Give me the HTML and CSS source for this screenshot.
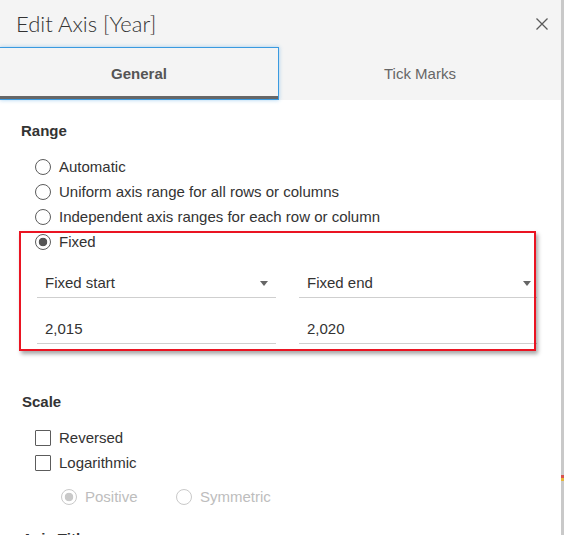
FILE: index.html
```html
<!DOCTYPE html>
<html lang="en">
<head>
<meta charset="utf-8">
<title>Edit Axis [Year]</title>
<link rel="stylesheet" href="styles.css">
</head>
<body>
<div class="page">
  <div class="dialog">
    <header class="head">
      <div class="titlebar">
        <h1 class="title">Edit Axis [Year]</h1>
        <span class="close" aria-label="Close">
          <svg width="14" height="14" viewBox="0 0 14 14"><path d="M1.5 1.5 L12.5 12.5 M12.5 1.5 L1.5 12.5" stroke="#5a5a5a" stroke-width="1.3" fill="none"/></svg>
        </span>
      </div>
      <div class="tabs">
        <div class="tab active">General</div>
        <div class="tab">Tick Marks</div>
      </div>
    </header>
    <main class="content">
      <section class="sec">
        <h2 class="sec-title">Range</h2>
        <ul class="options">
          <li class="opt"><span class="radio"></span>Automatic</li>
          <li class="opt"><span class="radio"></span>Uniform axis range for all rows or columns</li>
          <li class="opt"><span class="radio"></span>Independent axis ranges for each row or column</li>
        </ul>
        <div class="fixed">
          <div class="opt"><span class="radio checked"></span>Fixed</div>
          <div class="fields">
            <div class="field select"><span>Fixed start</span><span class="caret"></span></div>
            <div class="field select end"><span>Fixed end</span><span class="caret"></span></div>
            <div class="field">2,015</div>
            <div class="field">2,020</div>
          </div>
        </div>
      </section>
      <section class="sec">
        <h2 class="sec-title scale">Scale</h2>
        <ul class="options checks">
          <li class="opt"><span class="check"></span>Reversed</li>
          <li class="opt"><span class="check"></span>Logarithmic</li>
        </ul>
        <div class="subopts">
          <div class="opt disabled first"><span class="radio checked"></span>Positive</div>
          <div class="opt disabled"><span class="radio"></span>Symmetric</div>
        </div>
      </section>
      <section class="sec">
        <h2 class="sec-title axis">Axis Titles</h2>
      </section>
    </main>
  </div>
  <div class="edge"></div>
</div>
</body>
</html>
```

FILE: styles.css
```css
html, body {
  margin: 0;
  padding: 0;
  height: 100%;
  overflow: hidden;
}
body {
  font-family: "Liberation Sans", Arial, sans-serif;
  font-size: 15px;
  color: #333;
  background: #fff;
}
.page {
  display: flex;
  height: 535px;
  overflow: hidden;
}
.dialog {
  width: 561px;
  flex: none;
  overflow: hidden;
}
.edge {
  width: 3px;
  flex: none;
  background: linear-gradient(to bottom, #c9c9c9 0, #c9c9c9 475px, #d9534f 475px, #d9534f 478px, #e6b83c 478px, #e6b83c 481px, #c9c9c9 481px);
}

/* header */
.head {
  background: #f4f4f4;
  height: 100px;
}
.titlebar {
  height: 47px;
  display: flex;
  align-items: center;
  justify-content: space-between;
  padding: 0 12px 0 16px;
  box-sizing: border-box;
}
.title {
  margin: 0;
  font-family: Lato, "Liberation Sans", sans-serif;
  font-weight: 300;
  font-size: 22px;
  color: #333;
  line-height: 26px;
  padding-top: 0;
}
.close {
  display: flex;
  width: 14px;
  height: 14px;
  margin-top: 1px;
}
.tabs {
  display: flex;
  height: 53px;
}
.tab {
  flex: 1;
  display: flex;
  align-items: center;
  justify-content: center;
  font-size: 15px;
  color: #666;
  box-sizing: border-box;
}
.tab.active {
  flex: none;
  width: 279px;
  font-weight: bold;
  color: #555;
  border: 1px solid #3a9ae0;
  border-left: none;
  box-shadow: inset 0 -3px 0 #666, 0 0 4px rgba(58, 154, 224, 0.45);
}

/* content */
.content {
  padding: 0 21px;
}
.sec-title {
  margin: 22px 0 14px;
  font-size: 15px;
  font-weight: bold;
  line-height: 18px;
  color: #333;
}
.sec-title.scale {
  margin: 49px 0 14px 1px;
}
.sec-title.axis {
  margin: 21px 0 0 1px;
}
.options {
  list-style: none;
  margin: 0 0 0 14px;
  padding: 0;
}
.opt {
  display: flex;
  align-items: center;
  height: 25px;
  line-height: 25px;
}
.radio, .check {
  flex: none;
  width: 16px;
  height: 16px;
  box-sizing: border-box;
  border: 1px solid #5c5c5c;
  margin-right: 8px;
  background: #fff;
}
.radio {
  border-radius: 50%;
}
.radio.checked {
  background: radial-gradient(circle, #555 0, #555 4px, #fff 4.6px);
}
.check {
  border-radius: 1px;
}

/* fixed group */
.fixed {
  position: relative;
  padding-left: 14px;
}
.fixed::after {
  content: "";
  position: absolute;
  top: 2px;
  left: -2px;
  width: 517px;
  height: 120px;
  box-sizing: border-box;
  border: 2px solid #ea1422;
  box-shadow: 2px 3px 4px rgba(0, 0, 0, 0.35);
  pointer-events: none;
}
.fields {
  display: grid;
  grid-template-columns: 239px 238px;
  column-gap: 23px;
  row-gap: 16px;
  margin: 13px 0 0 2px;
}
.field {
  height: 30px;
  box-sizing: border-box;
  border-bottom: 1px solid #cfcfcf;
  padding: 0 8px;
  display: flex;
  align-items: center;
  justify-content: space-between;
  color: #333;
}
.field.select {
  height: 31px;
}
.field.end {
  padding-right: 6px;
}
.caret {
  width: 0;
  height: 0;
  border-left: 4.5px solid transparent;
  border-right: 4.5px solid transparent;
  border-top: 5px solid #666;
  margin-top: 2px;
}

/* scale */
.checks .opt {
  height: 25px;
}
.subopts {
  display: flex;
  margin: 9px 0 0 40px;
}
.subopts .first {
  width: 115px;
}
.opt.disabled {
  color: #bdbdbd;
}
.opt.disabled .radio {
  border-color: #c9c9c9;
}
.opt.disabled .radio.checked {
  background: radial-gradient(circle, #c9c9c9 0, #c9c9c9 4px, #fff 4.6px);
}
```
